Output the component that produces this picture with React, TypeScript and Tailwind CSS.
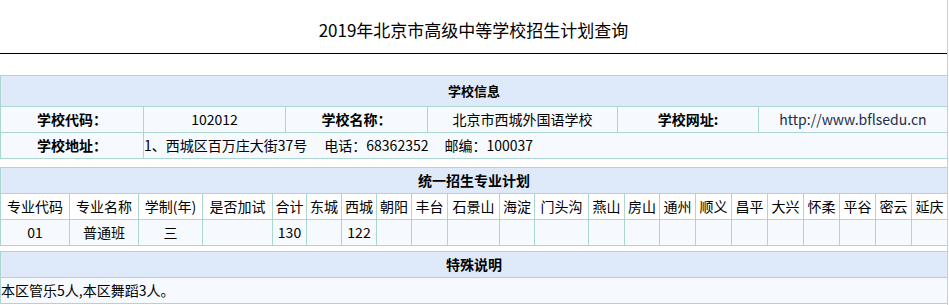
const font = { fontFamily: '"Noto Sans CJK SC", "Microsoft YaHei", sans-serif' };

const districts = [
  '朝阳', '丰台', '石景山', '海淀', '门头沟', '燕山', '房山', '通州', '顺义',
  '昌平', '大兴', '怀柔', '平谷', '密云', '延庆',
];

const planHead = ['专业代码', '专业名称', '学制(年)', '是否加试', '合计', '东城', '西城', ...districts];
const planRow = ['01', '普通班', '三', '', '130', '', '122', ...districts.map(() => '')];

export default function App() {
  return (
    <div className="w-[949px] h-[305px] bg-white text-black overflow-hidden" style={font}>
      <div className="w-[948px] h-[305px] border-r border-[#b4dad6]">
        {/* Title */}
        <div className="h-[53px] flex items-center justify-center text-[17px] pt-[6px]">
          2019年北京市高级中等学校招生计划查询
        </div>
        <div className="h-px bg-black" />

        {/* 学校信息 */}
        <div className="mt-[21px] grid grid-cols-[142px_141px_141px_189px_140px_188px] grid-rows-[30px_25px_25px] gap-px p-px bg-[#acd6d2] text-[14px]">
          <div className="col-span-full bg-[#deeafa] flex items-center justify-center font-bold text-[13px]">学校信息</div>
          <div className="bg-[#f6fafe] flex items-center justify-center font-bold">学校代码：</div>
          <div className="bg-[#f6fafe] flex items-center justify-center">102012</div>
          <div className="bg-[#f6fafe] flex items-center justify-center font-bold">学校名称：</div>
          <div className="bg-[#f6fafe] flex items-center justify-center">北京市西城外国语学校</div>
          <div className="bg-[#f6fafe] flex items-center justify-center font-bold">学校网址:</div>
          <div className="bg-[#f6fafe] flex items-center justify-center text-[#1e2d4a]">http://www.bflsedu.cn</div>
          <div className="bg-[#f6fafe] flex items-center justify-center font-bold">学校地址：</div>
          <div className="col-span-5 bg-[#f6fafe] flex items-center whitespace-nowrap">
            <span>1、西城区百万庄大街37号</span>
            <span className="ml-[17px]">电话：68362352</span>
            <span className="ml-[16px]">邮编：100037</span>
          </div>
        </div>

        {/* 统一招生专业计划 */}
        <div className="mt-[8px] grid grid-cols-[68px_68px_63px_69px_33px_34px_34px_34px_35px_51px_34px_53px_35px_34px_35px_35px_35px_35px_35px_35px_35px_35px] grid-rows-[25px_25px_25px] gap-px p-px bg-[#acd6d2] text-[14px]">
          <div className="col-span-full bg-[#deeafa] flex items-center justify-center font-bold">统一招生专业计划</div>
          {planHead.map((h) => (
            <div key={h} className="bg-white flex items-center justify-center whitespace-nowrap">{h}</div>
          ))}
          {planRow.map((v, i) => (
            <div key={i} className="bg-[#f6fafe] flex items-center justify-center">{v}</div>
          ))}
        </div>

        {/* 特殊说明 */}
        <div className="mt-[5px] grid grid-cols-[946px] grid-rows-[25px_25px] gap-px p-px bg-[#acd6d2] text-[14px]">
          <div className="bg-[#deeafa] flex items-center justify-center font-bold">特殊说明</div>
          <div className="bg-[#f6fafe] flex items-center">本区管乐5人,本区舞蹈3人。</div>
        </div>
      </div>
    </div>
  );
}
